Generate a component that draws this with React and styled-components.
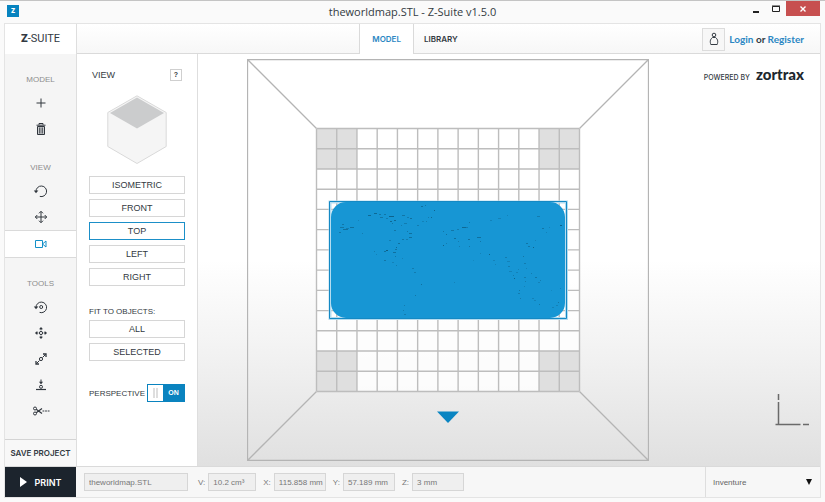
import React, { useState } from 'react';
import styled, { createGlobalStyle } from 'styled-components';

const GlobalStyle = createGlobalStyle`
  * {
    box-sizing: border-box;
  }
  body {
    margin: 0;
    background: #fafafa;
    color: #333a42;
    font-family: 'Liberation Sans', Arial, sans-serif;
    font-size: 8px;
  }
  button, input, select {
    margin: 0;
    padding: 0;
    font-family: inherit;
    color: inherit;
  }
  button {
    cursor: pointer;
  }
  svg {
    display: block;
  }
`;

const Frame = styled.div`
  display: flex;
  flex-direction: column;
  min-height: 100vh;
  padding: 0 4px 4px;
  border-top: 1px solid #c4c4c4;
`;

const TitleBar = styled.header`
  display: grid;
  grid-template-columns: 1fr auto 1fr;
  height: 22px;
`;

const AppBadge = styled.div`
  width: 12px;
  height: 12px;
  margin: 4px 3px;
  background: #0683bf;
  color: #fff;
  font-family: Inter, sans-serif;
  font-size: 6px;
  font-weight: 900;
  line-height: 12px;
  text-align: center;
`;

const WindowTitle = styled.h1`
  margin: 0;
  font-family: 'Open Sans', sans-serif;
  font-size: 11px;
  font-weight: 400;
  line-height: 22px;
`;

const WindowButtons = styled.div`
  display: flex;
  justify-content: flex-end;
  padding-right: 1px;
`;

const WindowButton = styled.button`
  display: flex;
  align-items: center;
  justify-content: center;
  width: ${props => (props.$close ? 34 : 20)}px;
  height: 15px;
  border: none;
  background: ${props => (props.$close ? '#c75050' : 'transparent')};
  color: ${props => (props.$close ? '#fff' : '#222')};
`;

const AppWindow = styled.div`
  display: flex;
  flex: 1;
  flex-direction: column;
  border: 1px solid #e4e4e4;
`;

const Header = styled.div`
  display: grid;
  grid-template-columns: 1fr auto 1fr;
  height: 30px;
  border-bottom: 1px solid #dadada;
  background: linear-gradient(#fff, #f7f7f7);
`;

const Logo = styled.div`
  width: 72px;
  border-right: 1px solid #dedede;
  background: #fff;
  font-family: Roboto, sans-serif;
  font-size: 11px;
  line-height: 30px;
  text-align: center;
  & > b {
    font-weight: 900;
  }
`;

const Tabs = styled.nav`
  display: flex;
`;

const Tab = styled.a`
  height: 30px;
  padding: 0 ${props => (props.$active ? '12px' : '8px 0 10px')};
  border: solid #dadada;
  border-width: ${props => (props.$active ? '0 1px' : '0')};
  background: ${props => (props.$active ? '#fff' : 'transparent')};
  color: ${props => (props.$active ? '#2b87c3' : '#333a42')};
  font-family: Inter, sans-serif;
  font-weight: 600;
  line-height: 31px;
  text-decoration: none;
`;

const Account = styled.div`
  display: flex;
  align-items: center;
  justify-content: flex-end;
  gap: 4px;
  padding-right: 16px;
  font-family: Lato, sans-serif;
  font-size: 10px;
  font-weight: 700;
  & a {
    color: #2b87c3;
    text-decoration: none;
  }
`;

const AccountButton = styled.button`
  display: flex;
  align-items: center;
  justify-content: center;
  width: 23px;
  height: 23px;
  border: 1px solid #dcdcdc;
  background: #f7f7f7;
`;

const Body = styled.div`
  display: flex;
  flex: 1;
`;

const Rail = styled.nav`
  display: flex;
  flex-direction: column;
  width: 72px;
  padding-top: 16px;
  border-right: 1px solid #dedede;
  background: #f5f5f5;
`;

const RailGroup = styled.section`
  display: flex;
  flex-direction: column;
  & + & {
    margin-top: 16px;
  }
`;

const RailLabel = styled.h2`
  margin: 0;
  color: #8d8d8d;
  font-size: 8px;
  font-weight: 400;
  line-height: 20px;
  text-align: center;
`;

const RailButton = styled.button`
  display: flex;
  align-items: center;
  justify-content: center;
  height: ${props => (props.$active ? 28 : 26)}px;
  border: solid #dadada;
  border-width: ${props => (props.$active ? '1px 0' : '0')};
  background: ${props => (props.$active ? '#fff' : 'transparent')};
  color: ${props => (props.$active ? '#1490c8' : '#30363d')};
`;

const SaveButton = styled.button`
  height: 27px;
  margin-top: auto;
  border: none;
  border-top: 1px solid #d4d4d4;
  background: #f8f8f8;
  font-family: Inter, sans-serif;
  font-size: 8px;
  font-weight: 600;
`;

const Panel = styled.aside`
  display: flex;
  flex-direction: column;
  width: 121px;
  padding: 14px 12px;
  border-right: 1px solid #dedede;
  background: #fff;
`;

const PanelHead = styled.div`
  display: flex;
  align-items: center;
  justify-content: space-between;
  height: 14px;
  padding: 0 3px;
  & > h2 {
    margin: 0;
    font-size: 9px;
    font-weight: 400;
  }
`;

const HelpButton = styled.button`
  width: 12px;
  height: 12px;
  border: 1px solid #cfcfcf;
  background: #fff;
  font-size: 7px;
  font-weight: 700;
  line-height: 10px;
`;

const CubeBox = styled.div`
  display: flex;
  justify-content: center;
  padding: 13px 0 11px;
`;

const ButtonStack = styled.div`
  display: flex;
  flex-direction: column;
  gap: 5px;
`;

const ViewButton = styled.button`
  height: 18px;
  border: 1px solid ${props => (props.$active ? '#1b8fc8' : '#d6d6d6')};
  background: #fff;
  font-size: 9px;
  line-height: 16px;
`;

const FitLabel = styled.h3`
  margin: 20px 0 2px;
  font-size: 8px;
  font-weight: 400;
  line-height: 12px;
`;

const ToggleRow = styled.label`
  display: flex;
  align-items: center;
  justify-content: space-between;
  margin-top: 23px;
  cursor: pointer;
`;

const ToggleInput = styled.input`
  width: 0;
  height: 0;
  appearance: none;
`;

const Toggle = styled.span`
  display: flex;
  flex-direction: ${props => (props.$on ? 'row' : 'row-reverse')};
  width: 38px;
  height: 18px;
  border: 1px solid #0a83bf;
  background: ${props => (props.$on ? '#0a83bf' : '#9aa3aa')};
  color: #fff;
  font-size: 7px;
  font-weight: 700;
  line-height: 16px;
  text-align: center;
`;

const ToggleKnob = styled.span`
  display: flex;
  justify-content: center;
  gap: 1px;
  width: 15px;
  padding: 3px 0;
  background: #fff;
  &::before,
  &::after {
    content: '';
    width: 2px;
    background: #dedede;
  }
`;

const ToggleText = styled.span`
  flex: 1;
`;

const Viewport = styled.main`
  display: flex;
  flex: 1;
  justify-content: space-between;
  padding: 5px 10px 5px 49px;
  background: linear-gradient(#fff 50%, #f1f1f1 74%, #e0e0e0);
`;

const ViewportSide = styled.div`
  display: flex;
  flex-direction: column;
  align-items: flex-end;
  justify-content: space-between;
  padding-bottom: 34px;
`;

const PoweredBy = styled.div`
  display: flex;
  align-items: baseline;
  gap: 6px;
  padding: 5px 6px 0 0;
  font-family: Inter, sans-serif;
  font-size: 7px;
  font-weight: 500;
  line-height: 20px;
  & > b {
    color: #20272e;
    font-family: Lato, sans-serif;
    font-size: 15px;
    font-weight: 900;
  }
`;

const Footer = styled.footer`
  display: flex;
  height: 31px;
  border-top: 1px solid #dadada;
  background: #f7f7f7;
`;

const PrintButton = styled.button`
  display: flex;
  align-items: center;
  justify-content: center;
  gap: 8px;
  width: 71px;
  border: none;
  background: #1c242d;
  color: #fff;
  font-family: Inter, sans-serif;
  font-size: 9px;
  font-weight: 600;
`;

const Stats = styled.div`
  display: flex;
  flex: 1;
  align-items: center;
  gap: 7px;
  padding-left: 8px;
  color: #777;
`;

const Field = styled.label`
  display: flex;
  align-items: center;
  gap: 3px;
`;

const FieldInput = styled.input`
  width: ${props => props.$width}px;
  height: 18px;
  padding-left: 4px;
  border: 1px solid #d6d6d6;
  background: #efefef;
  font-size: 8px;
`;

const FileInput = styled(FieldInput)`
  margin-right: 3px;
`;

const ProfilePicker = styled.div`
  display: flex;
  align-items: center;
  width: 115px;
  padding: 0 8px 0 7px;
  border-left: 1px solid #dedede;
`;

const ProfileSelect = styled.select`
  flex: 1;
  height: 30px;
  border: none;
  background: transparent;
  color: #666;
  font-size: 8px;
  appearance: none;
`;

const Icon = ({ children, width = 16 }) => (
  <svg
    width={width}
    height="14"
    viewBox={`0 0 ${width} 14`}
    fill="none"
    stroke="currentColor"
    strokeWidth="1"
    aria-hidden="true"
  >
    {children}
  </svg>
);

const AddIcon = () => (
  <Icon>
    <path d="M8 2.5v9M3.5 7h9" />
  </Icon>
);

const TrashIcon = () => (
  <Icon>
    <path d="M3.5 3.2h9M6 2.800V1.500h4v1.300" />
    <path d="M4.500 4.500h7v8h-7z" fill="#c9cbcd" />
    <path d="M6.800 5.500v6M9.200 5.500v6" />
  </Icon>
);

const RotateIcon = () => (
  <Icon>
    <path d="M3 7.500a5.300 5.300 0 1 1 3.800 4.900" />
    <path d="M.8 6.400h4.600L3 9.200z" fill="currentColor" stroke="none" />
  </Icon>
);

const MoveIcon = () => (
  <Icon>
    <path d="M8 1.500v11M2.500 7h11" />
    <path d="M6 3.300l2-2 2 2M6 10.700l2 2 2-2M4.300 5l-2 2 2 2M11.700 5l2 2-2 2" />
  </Icon>
);

const CameraIcon = () => (
  <Icon>
    <path d="M2.500 3.500h7v7h-7zM9.500 7l3.500-3v6z" />
  </Icon>
);

const TurnObjectIcon = () => (
  <Icon>
    <path d="M3 7.500a5.300 5.300 0 1 1 3.600 4.900" />
    <path d="M.8 6.400h4.600L3 9.200z" fill="currentColor" stroke="none" />
    <circle cx="8.200" cy="7" r="1.500" />
  </Icon>
);

const MoveObjectIcon = () => (
  <Icon>
    <circle cx="8" cy="7" r="1.600" />
    <path d="M8 2v2.300M8 9.700V12M3 7h2.300M10.700 7H13" />
    <path
      d="M8 .9l2 2.400H6zM8 13.100l2-2.400H6zM1.900 7l2.400-2v4zM14.100 7l-2.400-2v4z"
      fill="currentColor"
      stroke="none"
    />
  </Icon>
);

const ScaleIcon = () => (
  <Icon>
    <circle cx="8" cy="7" r="1.600" />
    <path d="M9.500 5.500l3-3M6.500 8.500l-3 3" />
    <path d="M10 2h3v3M6 12H3V9" strokeWidth="1.300" />
  </Icon>
);

const PlaceIcon = () => (
  <Icon>
    <path d="M3 11.500h10" strokeWidth="1.200" />
    <path d="M8 1.500v4" />
    <path d="M5.900 3.800h4.200L8 6.300z" fill="currentColor" stroke="none" />
    <circle cx="8" cy="8.800" r="1.500" />
  </Icon>
);

const CutIcon = () => (
  <Icon width={18}>
    <circle cx="3" cy="4.500" r="1.500" />
    <circle cx="3" cy="9.500" r="1.500" />
    <path d="M4.200 5.200L10 9.500M4.200 8.800L10 4.500" strokeWidth="1.200" />
    <path d="M10.500 7h7" strokeDasharray="1.800 .8" />
  </Icon>
);

const groups = [
  { label: 'MODEL', items: [['Add', AddIcon], ['Delete', TrashIcon]] },
  {
    label: 'VIEW',
    items: [['Rotate view', RotateIcon], ['Pan', MoveIcon], ['Camera', CameraIcon]],
  },
  {
    label: 'TOOLS',
    items: [
      ['Rotate', TurnObjectIcon],
      ['Move', MoveObjectIcon],
      ['Scale', ScaleIcon],
      ['Place on platform', PlaceIcon],
      ['Split', CutIcon],
    ],
  },
];

const views = ['ISOMETRIC', 'FRONT', 'TOP', 'LEFT', 'RIGHT'];

// small gaps in the map mesh: x, y, width, opacity
const specks = [
  [93, 168, 4, 0.5], [96, 170, 5, 0.6], [92, 173, 2, 0.5], [99, 169, 3, 0.4], [103, 168, 4, 0.6],
  [95, 165, 2, 0.5], [115, 174, 1, 0.4], [111, 161, 1, 0.3],
  [121, 156, 3, 0.7], [127, 154, 3, 0.7], [132, 155, 2, 0.5], [133, 158, 3, 0.5], [137, 155, 2, 0.5],
  [142, 157, 5, 0.8], [139, 159, 2, 0.4], [143, 162, 2, 0.7], [147, 161, 2, 0.7], [145, 164, 1, 0.5],
  [155, 156, 3, 0.5], [160, 158, 2, 0.4], [163, 159, 2, 0.6], [157, 164, 3, 0.4], [154, 166, 1, 0.4],
  [147, 171, 2, 0.5], [160, 172, 1, 0.5], [162, 174, 3, 0.6], [162, 178, 3, 0.6], [155, 180, 2, 0.5],
  [159, 180, 2, 0.4], [151, 184, 2, 0.6], [149, 188, 1, 0.7], [148, 190, 2, 0.5], [146, 193, 3, 0.6],
  [137, 192, 2, 0.6], [139, 191, 2, 0.9], [127, 192, 1, 0.4], [129, 195, 1, 0.3], [137, 201, 2, 0.5],
  [148, 197, 1, 0.5], [155, 199, 1, 0.3], [145, 203, 2, 0.3], [149, 206, 1, 0.4], [142, 181, 2, 0.4],
  [174, 147, 2, 0.6], [178, 146, 1, 0.5], [187, 151, 1, 0.8], [184, 158, 1, 0.7], [181, 158, 1, 0.4],
  [170, 166, 2, 0.4], [175, 162, 2, 0.3], [179, 162, 1, 0.4], [196, 172, 1, 0.5], [199, 175, 1, 0.6],
  [204, 171, 3, 0.5], [210, 170, 2, 0.4], [215, 168, 4, 0.7], [219, 168, 2, 0.4], [222, 163, 1, 0.5],
  [199, 184, 1, 0.4], [196, 186, 1, 0.8], [207, 179, 2, 0.6], [211, 182, 1, 0.4], [221, 180, 2, 0.6],
  [230, 178, 4, 0.6], [233, 182, 1, 0.5], [222, 187, 1, 0.5], [212, 187, 1, 0.4], [243, 161, 2, 0.3],
  [251, 159, 3, 0.3], [260, 156, 1, 0.3], [290, 157, 3, 0.4], [295, 169, 2, 0.5], [299, 173, 1, 0.3],
  [313, 166, 2, 0.8], [302, 168, 1, 0.3], [279, 184, 2, 0.5], [281, 187, 2, 0.5], [286, 188, 1, 0.8],
  [288, 181, 1, 0.3], [242, 195, 1, 0.8], [233, 194, 1, 0.3], [226, 201, 1, 0.2], [246, 201, 2, 0.3],
  [248, 205, 1, 0.3], [258, 198, 2, 0.4], [260, 202, 3, 0.3], [261, 207, 2, 0.4], [262, 212, 3, 0.3],
  [266, 216, 1, 0.4], [267, 219, 1, 0.8], [269, 213, 2, 0.3], [271, 210, 1, 0.3], [276, 197, 1, 0.5],
  [277, 204, 2, 0.4], [279, 209, 1, 0.3], [277, 218, 2, 0.4], [278, 222, 1, 0.4], [284, 214, 1, 0.4],
  [288, 218, 2, 0.5], [291, 223, 2, 0.3], [293, 221, 1, 0.4], [277, 227, 1, 0.3], [272, 231, 1, 0.5],
  [271, 234, 2, 0.4], [273, 239, 1, 0.4], [285, 239, 2, 0.3], [287, 241, 2, 0.3], [292, 245, 1, 0.5],
  [311, 243, 1, 0.5], [309, 246, 2, 0.3], [305, 248, 2, 0.3], [313, 229, 1, 0.3], [304, 231, 1, 0.2],
  [165, 209, 2, 0.4], [167, 213, 2, 0.4], [174, 225, 1, 0.6], [168, 236, 1, 0.5], [207, 223, 1, 0.3],
  [157, 246, 1, 0.4], [156, 251, 1, 0.4], [157, 255, 2, 0.4],
];

const gridLines = Array.from({ length: 14 }, (_, i) => 69.5 + (i * 263) / 13);

const Scene = () => (
  <svg width="402" height="402" viewBox="0 0 402 402" role="img" aria-label="Build platform, top view">
    <path
      d="M.5.500h401v401H.5zM.5.500l69 69M401.500.500l-69 69M.5 401.500l69-69M401.500 401.500l-69-69"
      fill="none"
      stroke="#b4b4b4"
      strokeWidth="1.300"
    />
    <path d="M69.500 69.500h263v263h-263z" fill="#fff" fillOpacity=".8" />
    <path
      d="M69.500 69.500h40.500v40.500h-40.500zM292 69.500h40.500v40.500h-40.500zM69.500 292h40.500v40.500h-40.500zM292 292h40.500v40.500h-40.500z"
      fill="#dfdfdf"
    />
    {gridLines.map(v => (
      <path key={v} d={`M${v} 69.500v263M69.500 ${v}h263`} stroke="#bdbdbd" strokeWidth="1.400" />
    ))}
    <path d="M83 143h236.500v116.500H83z" fill="none" stroke="#b5dcf0" strokeWidth="3" />
    <rect x="84" y="143" width="234" height="116" rx="15" fill="#1796d4" />
    <path d="M82.500 142.500h237v117h-237z" fill="none" stroke="#1489c4" />
    <g fill="#073c56" opacity=".7">
      {specks.map(([x, y, w, o]) => (
        <rect key={`${x}-${y}`} x={x} y={y} width={w} height="1" opacity={o} />
      ))}
    </g>
    <path d="M190 352.500h22l-11 11.500z" fill="#0a85c2" />
  </svg>
);

const Axes = () => (
  <svg width="36" height="34" viewBox="0 0 36 34" fill="none" stroke="#6a6a6a" aria-hidden="true">
    <path d="M4.500 1v6M4.500 9v22M1.500 31.500h25M29 31.500h6" strokeWidth="1.500" />
  </svg>
);

const Cube = () => (
  <svg width="60" height="70" viewBox="0 0 60 70" aria-hidden="true">
    <path d="M30 .8L59.200 17.500v34L30 68.500.8 51.500v-34z" fill="#f5f5f5" stroke="#d9d9d9" />
    <path d="M30 2.500L57 18 30 33.500 3 18z" fill="#cbcccd" />
  </svg>
);

const App = () => {
  const [tool, setTool] = useState('Camera');
  const [view, setView] = useState('TOP');
  const [perspective, setPerspective] = useState(true);

  return (
    <>
      <GlobalStyle />
      <Frame>
        <TitleBar>
          <AppBadge>Z</AppBadge>
          <WindowTitle>theworldmap.STL - Z-Suite v1.5.0</WindowTitle>
          <WindowButtons>
            <WindowButton aria-label="Minimize">
              <svg width="8" height="8">
                <path d="M1 6h6v2H1z" fill="currentColor" />
              </svg>
            </WindowButton>
            <WindowButton aria-label="Maximize">
              <svg width="8" height="8" fill="none" stroke="currentColor">
                <path d="M.5 1.500h7v5h-7zM0 1h8" />
              </svg>
            </WindowButton>
            <WindowButton $close aria-label="Close">
              <svg width="8" height="8" stroke="currentColor" strokeWidth="1.400">
                <path d="M1.500 1.500l5 5M6.500 1.500l-5 5" />
              </svg>
            </WindowButton>
          </WindowButtons>
        </TitleBar>

        <AppWindow>
          <Header>
            <Logo>
              <b>Z</b>-SUITE
            </Logo>
            <Tabs>
              <Tab href="#model" $active>MODEL</Tab>
              <Tab href="#library">LIBRARY</Tab>
            </Tabs>
            <Account>
              <AccountButton aria-label="Account">
                <svg width="10" height="14" fill="none" stroke="currentColor">
                  <circle cx="5" cy="3" r="1.800" />
                  <path d="M3.500 5.500C.8 7.500 1 10 1.800 12.500h6.400C9 10 9.200 7.500 6.500 5.500z" />
                </svg>
              </AccountButton>
              <span>
                <a href="#login">Login</a> or <a href="#register">Register</a>
              </span>
            </Account>
          </Header>

          <Body>
            <Rail>
              {groups.map(group => (
                <RailGroup key={group.label}>
                  <RailLabel>{group.label}</RailLabel>
                  {group.items.map(([name, ToolIcon]) => (
                    <RailButton
                      key={name}
                      aria-label={name}
                      $active={tool === name}
                      onClick={() => setTool(name)}
                    >
                      <ToolIcon />
                    </RailButton>
                  ))}
                </RailGroup>
              ))}
              <SaveButton>SAVE PROJECT</SaveButton>
            </Rail>

            <Panel>
              <PanelHead>
                <h2>VIEW</h2>
                <HelpButton>?</HelpButton>
              </PanelHead>
              <CubeBox>
                <Cube />
              </CubeBox>
              <ButtonStack>
                {views.map(name => (
                  <ViewButton key={name} $active={view === name} onClick={() => setView(name)}>
                    {name}
                  </ViewButton>
                ))}
              </ButtonStack>
              <FitLabel>FIT TO OBJECTS:</FitLabel>
              <ButtonStack>
                <ViewButton>ALL</ViewButton>
                <ViewButton>SELECTED</ViewButton>
              </ButtonStack>
              <ToggleRow>
                PERSPECTIVE
                <ToggleInput
                  type="checkbox"
                  checked={perspective}
                  onChange={e => setPerspective(e.target.checked)}
                />
                <Toggle $on={perspective}>
                  <ToggleKnob />
                  <ToggleText>{perspective ? 'ON' : 'OFF'}</ToggleText>
                </Toggle>
              </ToggleRow>
            </Panel>

            <Viewport>
              <Scene />
              <ViewportSide>
                <PoweredBy>
                  POWERED BY <b>zortrax</b>
                </PoweredBy>
                <Axes />
              </ViewportSide>
            </Viewport>
          </Body>

          <Footer>
            <PrintButton>
              <svg width="7" height="10">
                <path d="M0 0l7 5-7 5z" fill="currentColor" />
              </svg>
              PRINT
            </PrintButton>
            <Stats>
              <FileInput $width={104} aria-label="File name" readOnly value="theworldmap.STL" />
              <Field>
                V: <FieldInput $width={48} readOnly value="10.2 cm³" />
              </Field>
              <Field>
                X: <FieldInput $width={52} readOnly value="115.858 mm" />
              </Field>
              <Field>
                Y: <FieldInput $width={52} readOnly value="57.189 mm" />
              </Field>
              <Field>
                Z: <FieldInput $width={52} readOnly value="3 mm" />
              </Field>
            </Stats>
            <ProfilePicker>
              <ProfileSelect aria-label="Printer">
                <option>Inventure</option>
              </ProfileSelect>
              <svg width="6" height="6">
                <path d="M0 0h6L3 6z" fill="#111" />
              </svg>
            </ProfilePicker>
          </Footer>
        </AppWindow>
      </Frame>
    </>
  );
};

export default App;
